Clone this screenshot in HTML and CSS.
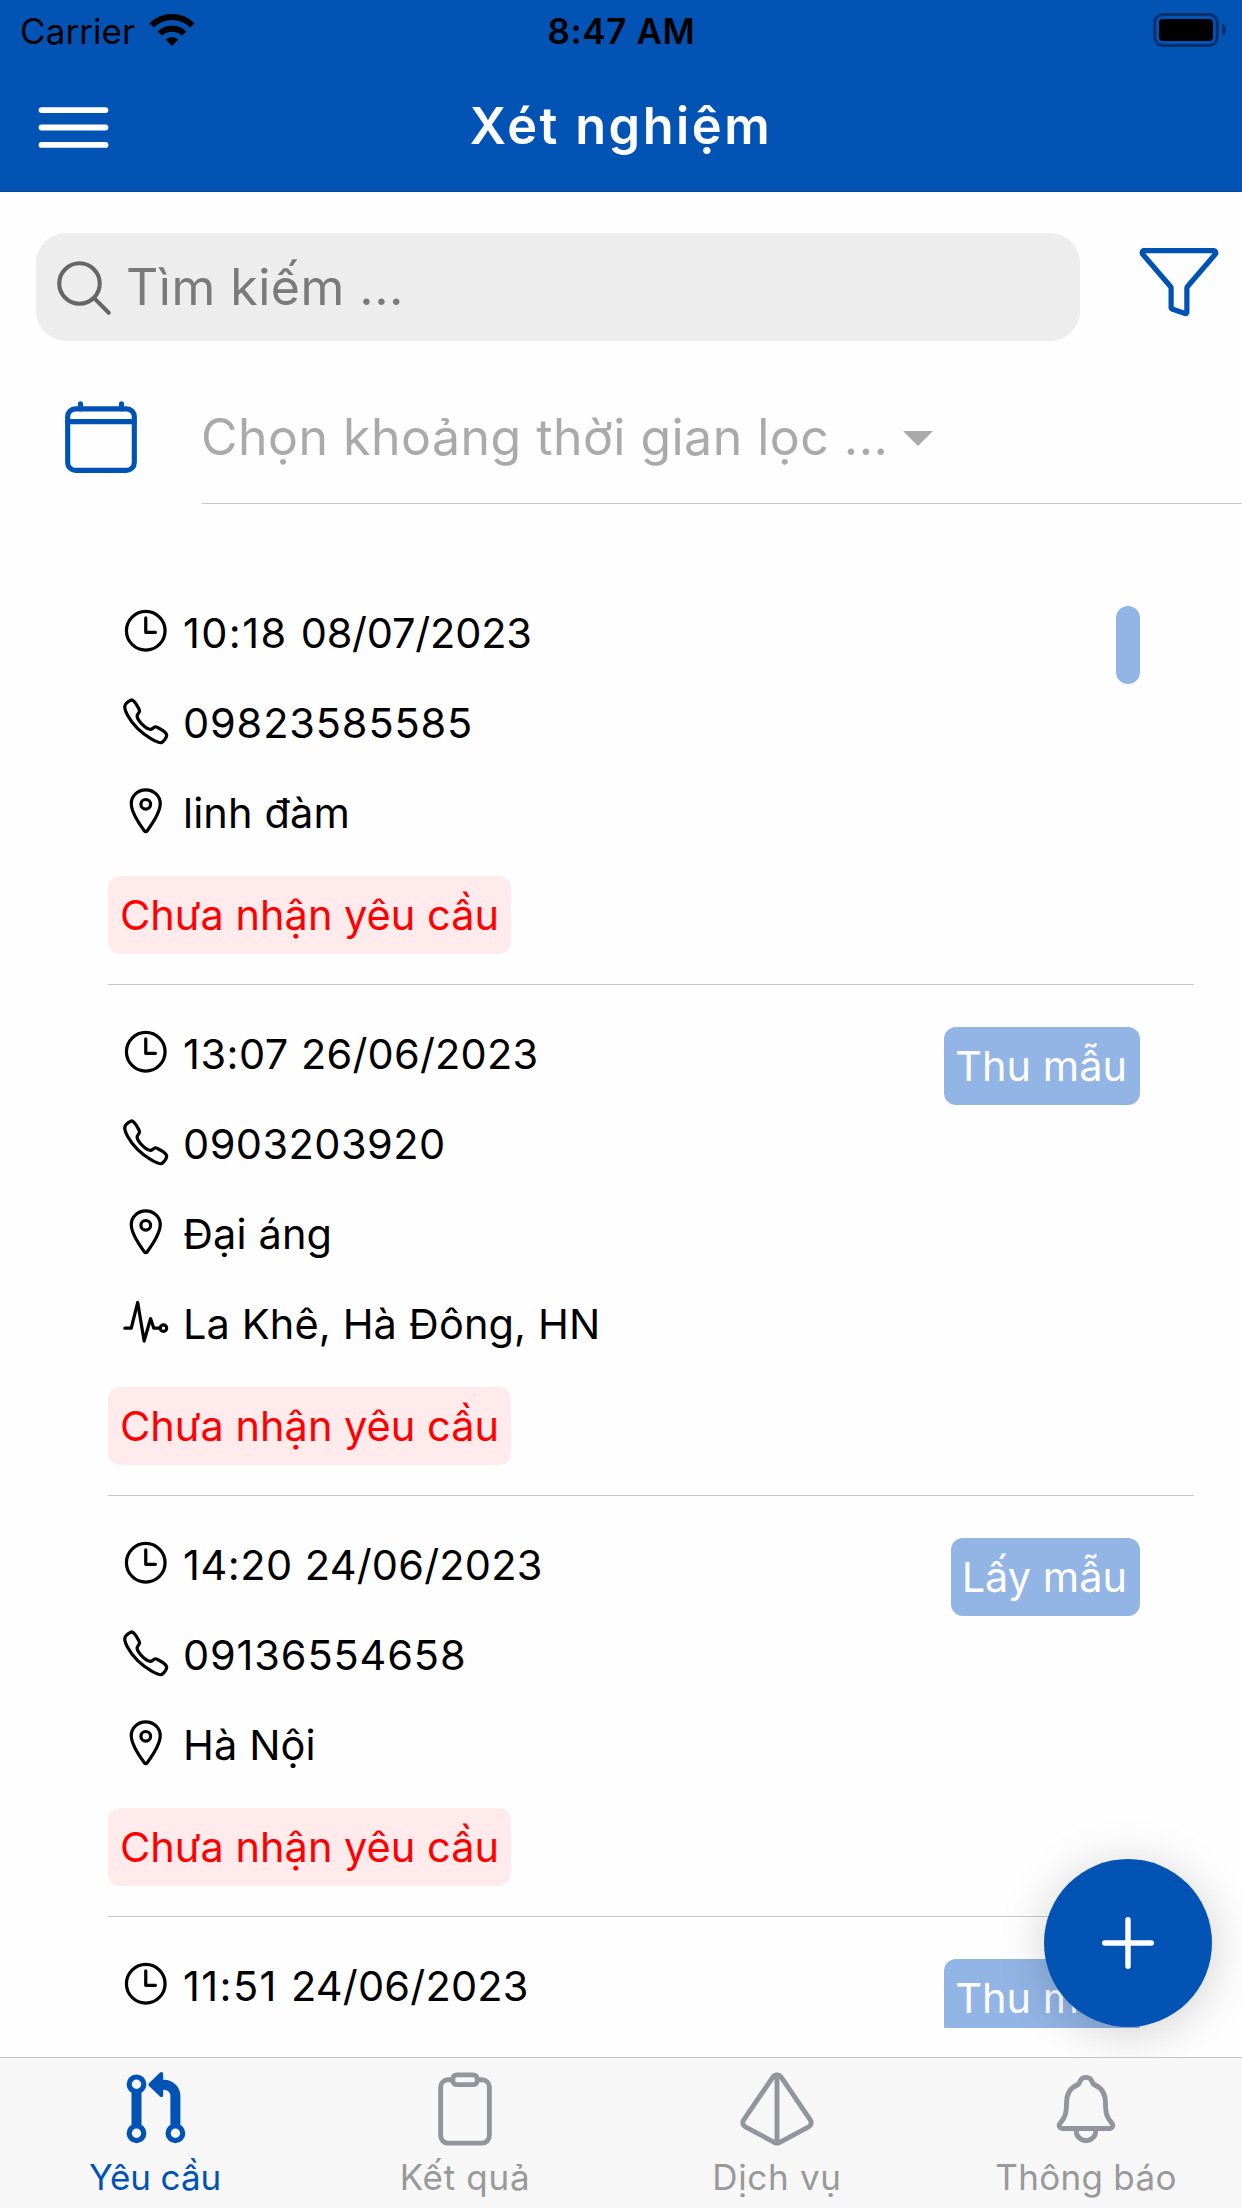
FILE: index.html
```html
<!DOCTYPE html>
<html lang="vi">
<head>
<meta charset="utf-8">
<title>Xét nghiệm</title>
<link rel="stylesheet" href="styles.css">
</head>
<body>
<svg class="sprite" aria-hidden="true">
  <symbol id="time" viewBox="0 0 512 512"><path d="M256 64C150 64 64 150 64 256s86 192 192 192 192-86 192-192S362 64 256 64z"/><path d="M256 128v144h96"/></symbol>
  <symbol id="call" viewBox="0 0 512 512"><path d="M451 374c-15.88-16-54.34-39.35-73-48.76-24.3-12.24-26.3-13.24-45.4.95-12.74 9.47-21.21 17.93-36.12 14.75s-47.31-21.11-75.68-49.39-47.34-61.62-50.53-76.48 5.41-23.23 14.79-36c13.22-18 12.22-21 .92-45.3-8.81-18.9-32.84-57-48.9-72.8C119.9 44 119.9 47 108.83 51.6A160.15 160.15 0 0083 65.37C67 76 58.12 84.83 51.91 98.1s-9 44.38 23.07 102.64 54.57 88.05 101.14 134.49S258.5 406.64 310.85 436c64.76 36.27 89.6 43.2 102.91 37s22.18-15 32.83-31a159.09 159.09 0 0013.8-25.8C465 405.17 468 391.17 451 374z"/></symbol>
  <symbol id="location" viewBox="0 0 512 512"><path d="M256 48c-79.5 0-144 61.39-144 137 0 87 96 224.87 131.25 272.49a15.77 15.77 0 0025.5 0C304 409.89 400 272.07 400 185c0-75.61-64.5-137-144-137z"/><circle cx="256" cy="192" r="48"/></symbol>
  <symbol id="pulse" viewBox="0 0 512 512"><path d="M48 320h64l64-256 64 384 64-224 32 96h64"/><circle cx="432" cy="320" r="32"/></symbol>
</svg>
<div class="screen">
  <header class="header">
    <div class="status">
      <div class="carrier">
        <span>Carrier</span>
        <svg class="wifi" viewBox="0 0 46 34"><path d="M.5 10.2a32 32 0 0145 0l-4.3 4.3a26 26 0 00-36.4 0z"/><path d="M8.6 18.4a20.4 20.4 0 0128.8 0l-4.4 4.4a14.2 14.2 0 00-20 0z"/><path d="M16.7 26.5a9 9 0 0112.6 0L23 33z"/></svg>
      </div>
      <div class="clock">8:47 AM</div>
      <div class="battery-side">
        <svg class="battery" viewBox="0 0 75 34"><rect class="shell" x="3.7" y="1.5" width="62.6" height="31" rx="8"/><rect x="8" y="6" width="54" height="22" rx="4"/><path class="nub" d="M71 11c2.600.8 4 3.200 4 6s-1.400 5.200-4 6z"/></svg>
      </div>
    </div>
    <div class="nav">
      <svg class="icon menu" viewBox="0 0 512 512"><path d="M80 160h352M80 256h352M80 352h352"/></svg>
      <h1 class="title">Xét nghiệm</h1>
    </div>
  </header>

  <div class="search-row">
    <div class="search">
      <svg class="icon search-icon" viewBox="0 0 512 512"><path d="M221.09 64a157.09 157.09 0 10157.09 157.09A157.1 157.1 0 00221.09 64z"/><path d="M338.29 338.29L448 448"/></svg>
      <span>Tìm kiếm ...</span>
    </div>
    <svg class="icon filter" viewBox="0 0 512 512"><path d="M35.4 87.12l168.65 196.44A16.07 16.07 0 01208 294v119.32a7.93 7.93 0 005.39 7.59l80.15 26.67A7.94 7.94 0 00304 440V294a16.07 16.07 0 014-10.44L476.6 87.12A14 14 0 00466 64H46.05A14 14 0 0035.4 87.12z"/></svg>
  </div>

  <div class="date-row">
    <svg class="icon calendar" viewBox="0 0 512 512"><rect x="48" y="80" width="416" height="384" rx="48"/><path d="M128 80V48M384 80V48M464 160H48"/></svg>
    <div class="date-field"><span>Chọn khoảng thời gian lọc ...</span><i class="caret"></i></div>
  </div>

  <main class="list">
    <article class="item">
      <div class="info">
        <div class="row time"><svg class="icon"><use href="#time"/></svg><span><span class="hour wide">10:18 </span><span class="day tight">08/07/2023</span></span></div>
        <div class="row phone"><svg class="icon"><use href="#call"/></svg><span>09823585585</span></div>
        <div class="row"><svg class="icon"><use href="#location"/></svg><span>linh đàm</span></div>
        <div class="state">Chưa nhận yêu cầu</div>
      </div>
      <div class="tag empty"></div>
    </article>
    <article class="item">
      <div class="info">
        <div class="row time"><svg class="icon"><use href="#time"/></svg><span><span class="hour">13:07 </span><span class="day">26/06/2023</span></span></div>
        <div class="row phone short"><svg class="icon"><use href="#call"/></svg><span>0903203920</span></div>
        <div class="row"><svg class="icon"><use href="#location"/></svg><span>Đại áng</span></div>
        <div class="row"><svg class="icon"><use href="#pulse"/></svg><span>La Khê, Hà Đông, HN</span></div>
        <div class="state">Chưa nhận yêu cầu</div>
      </div>
      <div class="tag">Thu mẫu</div>
    </article>
    <article class="item">
      <div class="info">
        <div class="row time"><svg class="icon"><use href="#time"/></svg><span><span class="hour">14:20 </span><span class="day">24/06/2023</span></span></div>
        <div class="row phone"><svg class="icon"><use href="#call"/></svg><span>09136554658</span></div>
        <div class="row"><svg class="icon"><use href="#location"/></svg><span>Hà Nội</span></div>
        <div class="state">Chưa nhận yêu cầu</div>
      </div>
      <div class="tag">Lấy mẫu</div>
    </article>
    <article class="item">
      <div class="info">
        <div class="row time"><svg class="icon"><use href="#time"/></svg><span><span class="hour wide">11:51 </span><span class="day">24/06/2023</span></span></div>
      </div>
      <div class="tag">Thu mẫu</div>
    </article>
  </main>

  <button class="fab" aria-label="Thêm"><svg viewBox="0 0 52 52"><path d="M26 2.7v46.6M2.7 26h46.6"/></svg></button>

  <nav class="tabs">
    <div class="tab active">
      <svg class="tab-icon" viewBox="0 0 78 78"><g class="ring"><circle cx="20.5" cy="14.3" r="7.3"/><circle cx="20.5" cy="63.3" r="7.3"/><circle cx="59.4" cy="63.3" r="7.3"/></g><path class="stem" d="M20.5 22v33.500M59.4 55.500V26A11.300 11.300 0 0048 14.700H44"/><path class="head" d="M33 13.200L44 2.600c1.500-1.300 3.200-.4 3.200 1.300v21.300c0 1.700-1.700 2.600-3.200 1.300L33 15.900c-.8-.8-.8-1.900 0-2.700z"/></svg>
      <span class="lbl-1">Yêu cầu</span>
    </div>
    <div class="tab">
      <svg class="icon tab-icon" viewBox="0 0 512 512"><path d="M336 64h32a48 48 0 0148 48v320a48 48 0 01-48 48H144a48 48 0 01-48-48V112a48 48 0 0148-48h32"/><rect x="176" y="32" width="160" height="64" rx="26.13"/></svg>
      <span class="lbl-2">Kết quả</span>
    </div>
    <div class="tab">
      <svg class="icon tab-icon" viewBox="0 0 512 512"><path d="M229.73 45.88L37.53 327.79a31.79 31.79 0 0011.31 46L241 476.26a31.77 31.77 0 0029.92 0l192.2-102.51a31.79 31.79 0 0011.31-46L282.27 45.88a31.8 31.8 0 00-52.54 0zM256 32v448"/></svg>
      <span class="lbl-2">Dịch vụ</span>
    </div>
    <div class="tab">
      <svg class="icon tab-icon" viewBox="0 0 512 512"><path d="M427.68 351.43C402 320 383.87 304 383.87 217.35 383.87 138 343.35 109.73 310 96c-4.43-1.82-8.6-6-9.95-10.55C294.2 65.54 277.8 48 256 48s-38.21 17.55-44 37.47c-1.35 4.6-5.52 8.71-9.95 10.53-33.39 13.75-73.87 41.92-73.87 121.35C128.13 304 110 320 84.32 351.43 73.68 364.45 83 384 101.61 384h308.88c18.51 0 27.77-19.61 17.19-32.57z"/><path d="M320 384v16a64 64 0 01-128 0v-16"/></svg>
      <span class="lbl-3">Thông báo</span>
    </div>
  </nav>
</div>
</body>
</html>
```
FILE: styles.css
```css
* { box-sizing: border-box; }

body {
  margin: 0;
  background: #fff;
  font-family: "Inter", "Liberation Sans", sans-serif;
  color: #000;
}

.sprite { display: none; }

.screen {
  position: relative;
  display: flex;
  flex-direction: column;
  width: 1242px;
  height: 2208px;
  overflow: hidden;
  background: #fefefe;
}

.icon {
  flex: none;
  fill: none;
  stroke: currentColor;
  stroke-width: 32;
  stroke-linecap: round;
  stroke-linejoin: round;
}

/* header */
.header {
  height: 192px;
  background: #0353b4;
  border-bottom: 1px solid #03479b;
}

.status {
  display: grid;
  grid-template-columns: 1fr auto 1fr;
  align-items: center;
  height: 60px;
  padding: 2px 16px 0 20px;
  font-size: 35px;
  line-height: 58px;
}

.carrier {
  display: flex;
  align-items: center;
  gap: 14px;
  letter-spacing: .08px;
}

.wifi { width: 46px; height: 34px; margin-bottom: 3px; }

.clock { font-weight: 600; letter-spacing: .6px; margin-right: 3px; }

.battery-side { display: flex; justify-content: flex-end; }
.battery { width: 75px; height: 34px; margin-bottom: 2px; }
.battery .shell { fill: none; stroke: #04316d; stroke-width: 3; }
.battery .nub { fill: #04316d; }

.nav {
  display: grid;
  grid-template-columns: 200px 1fr 200px;
  align-items: center;
  height: 132px;
}

.menu { width: 93px; height: 93px; margin: 3px 0 0 27px; color: #fff; }

.title {
  margin: 0;
  text-align: center;
  font-size: 50.5px;
  font-weight: 600;
  line-height: 60px;
  letter-spacing: 2.5px;
  color: #fff;
}

/* filters */
.search-row {
  display: flex;
  align-items: center;
  padding: 41px 0 0 36px;
}

.search {
  display: flex;
  align-items: center;
  width: 1044px;
  height: 108px;
  padding-left: 15px;
  gap: 9px;
  border-radius: 30px;
  background: #ededed;
  color: #7a7a7a;
  font-size: 50px;
  letter-spacing: .5px;
}

.search-icon { width: 66px; height: 66px; margin-top: 2px; color: #666; }

.filter { width: 84px; height: 84px; margin: 0 0 10px 57px; color: #0053b5; }

.date-row { display: flex; height: 163px; }

.calendar { width: 82px; height: 82px; margin: 55px 0 0 60px; color: #0053b5; }

.date-field {
  display: flex;
  align-items: center;
  flex: 1;
  margin-left: 60px;
  padding-top: 30px;
  border-bottom: 1px solid #c8c8c8;
  color: #aaa;
  font-size: 50px;
  letter-spacing: .47px;
}

.date-field span { margin-left: -1px; }

.caret {
  margin: 3px 0 0 15px;
  border: 15px solid transparent;
  border-top-color: #aaa;
  border-bottom: 0;
}

/* requests */
.list {
  height: 1524px;
  padding: 60px 48px 0 108px;
  overflow: hidden;
}

.item {
  display: flex;
  justify-content: space-between;
  align-items: flex-start;
  padding: 24px 54px 30px 0;
  border-bottom: 1px solid #c8c7cc;
  font-size: 41.5px;
}

.row {
  display: flex;
  align-items: center;
  gap: 12px;
  height: 90px;
  padding-left: 11.5px;
  letter-spacing: .12px;
}

.row .icon { width: 51.5px; height: 51.5px; margin-bottom: 4.5px; }
.hour { letter-spacing: .5px; white-space: pre; }
.hour.wide { letter-spacing: 1.4px; }
.day { letter-spacing: .2px; }
.day.tight { letter-spacing: -.2px; }
.phone { letter-spacing: .85px; }
.phone.short { letter-spacing: .46px; }

.state,
.tag {
  height: 78px;
  line-height: 78px;
  border-radius: 12px;
  white-space: nowrap;
}

.state {
  width: 403px;
  margin-top: 18px;
  padding-left: 12px;
  background: #ffebec;
  color: #f00;
}

.tag {
  margin-top: 18px;
  padding: 0 13px 0 11px;
  background: #92b5e5;
  color: #fff;
}

.empty { width: 24px; }

.fab {
  position: absolute;
  right: 30px;
  top: 1859px;
  display: grid;
  place-items: center;
  width: 168px;
  height: 168px;
  padding: 0;
  border: 0;
  border-radius: 50%;
  background: #0353b4;
  box-shadow: 0 6px 48px rgba(0, 0, 0, .18);
}

.fab svg { width: 52px; height: 52px; fill: none; stroke: #fff; stroke-width: 5.4; stroke-linecap: round; }

/* bottom tabs */
.tabs {
  position: relative;
  display: grid;
  grid-template-columns: 310px 310px 314px 304px;
  height: 151px;
  margin-top: 29px;
  padding-top: 12px;
  border-top: 1px solid #c2c2c4;
  background: #f7f7f7;
}

.tab {
  display: flex;
  flex-direction: column;
  align-items: center;
  gap: 8px;
  font-size: 35px;
  line-height: 42px;
  color: #999;
}

.tab-icon { width: 78px; height: 78px; color: #92959c; }

.active { color: #0053b5; }
.active .tab-icon { fill: #0053b5; }
.active .ring,
.active .stem { fill: none; stroke: #0053b5; }
.ring { stroke-width: 5.2; }
.stem { stroke-width: 10; }

.lbl-1 { letter-spacing: -.08px; }
.lbl-2 { letter-spacing: .7px; }
.lbl-3 { letter-spacing: .3px; }
```
